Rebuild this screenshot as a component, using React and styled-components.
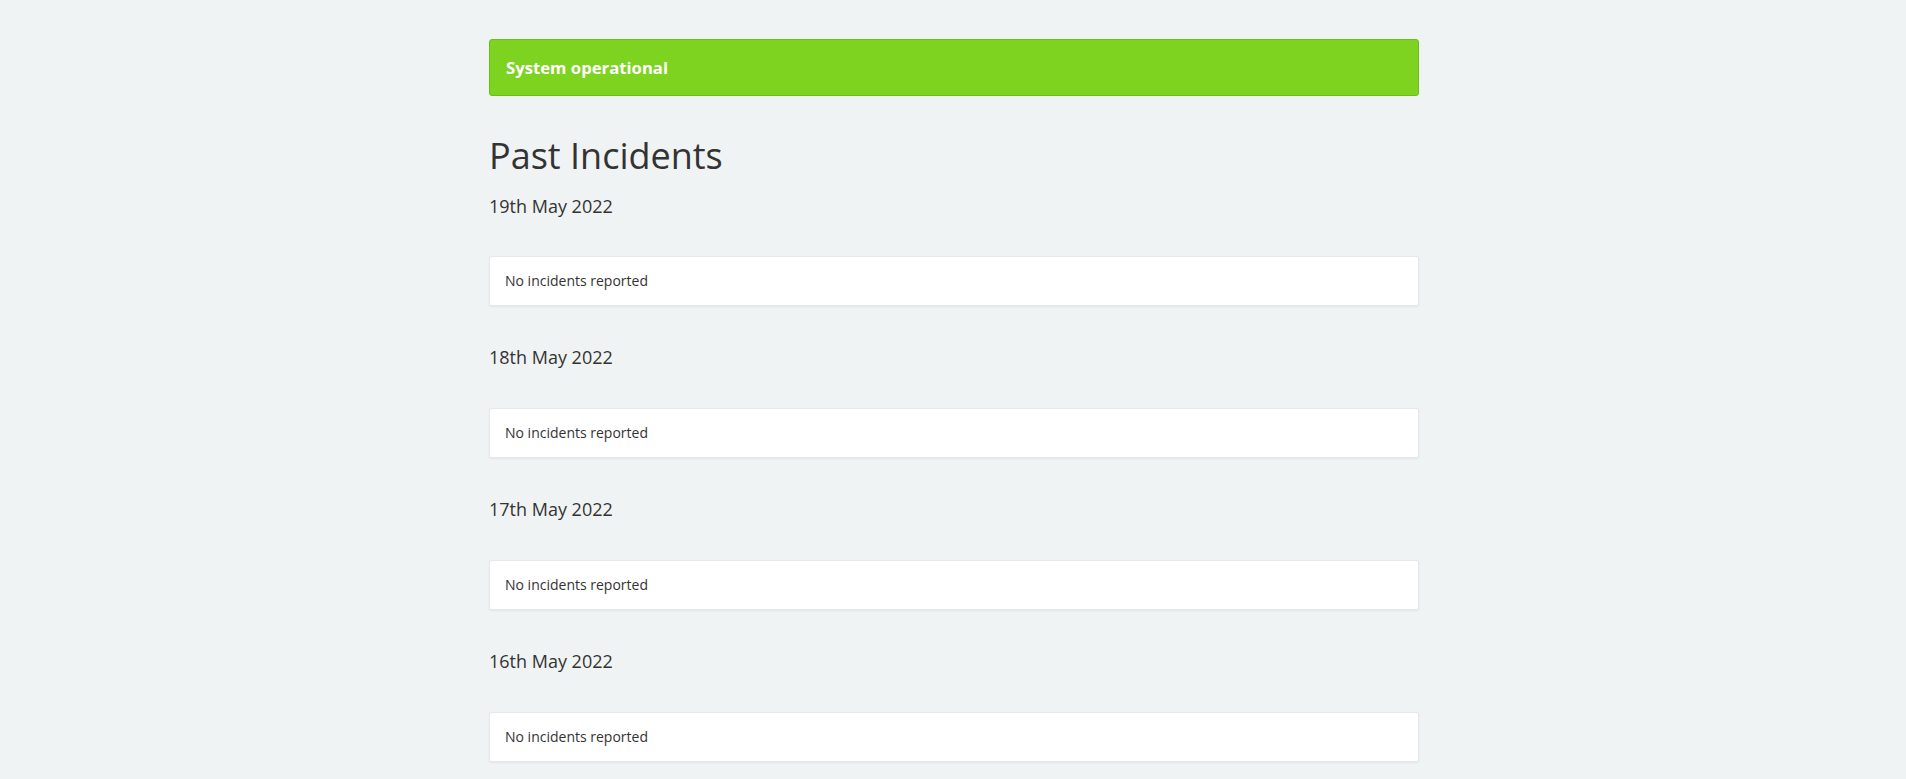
import React from 'react';
import styled, { createGlobalStyle } from 'styled-components';

const GlobalStyle = createGlobalStyle`
    html, body {
        margin: 0;
        padding: 0;
        background-color: #f0f3f4;
        color: #333333;
        font-family: "Open Sans", "Liberation Sans", sans-serif;
    }
`;

const Page = styled.div`
    width: 930px;
    margin: 0 auto;
    padding: 39px 0 40px 2px;
`;

const StatusBanner = styled.div`
    box-sizing: border-box;
    height: 57px;
    display: flex;
    align-items: center;
    padding: 0 16px;
    background-color: #7ed321;
    border: 1px solid #6dbf17;
    border-radius: 3px;

    color: #ffffff;
    font-size: 16.7px;
    font-weight: 700;
`;

const Title = styled.h1`
    margin: 40px 0 0 0;
    font-size: 36px;
    font-weight: 400;
    line-height: 1.1;
    color: #333333;
`;

const Timeline = styled.div`
    display: flex;
    flex-direction: column;
    gap: 42px;
    margin-top: 21px;
`;

const Day = styled.section`
    display: flex;
    flex-direction: column;
    gap: 40px;
`;

const DayTitle = styled.h4`
    margin: 0;
    font-size: 18px;
    font-weight: 400;
    line-height: 1.1;
    color: #333333;
`;

const Card = styled.div`
    box-sizing: border-box;
    height: 50px;
    padding: 15px;
    background-color: #ffffff;
    border: 1px solid #e3e8ea;
    border-radius: 2px;
    box-shadow: 0 1px 2px rgba(0, 0, 0, 0.05);

    font-size: 14px;
    line-height: 20px;
    display: flex;
    align-items: center;
`;

const days = ['19th May 2022', '18th May 2022', '17th May 2022', '16th May 2022'];

const App = () => {
    return (
        <>
            <GlobalStyle />
            <Page>
                <StatusBanner>System operational</StatusBanner>
                <Title>Past Incidents</Title>
                <Timeline>
                    {days.map((day) => (
                        <Day key={day}>
                            <DayTitle>{day}</DayTitle>
                            <Card>No incidents reported</Card>
                        </Day>
                    ))}
                </Timeline>
            </Page>
        </>
    );
};

export default App;
